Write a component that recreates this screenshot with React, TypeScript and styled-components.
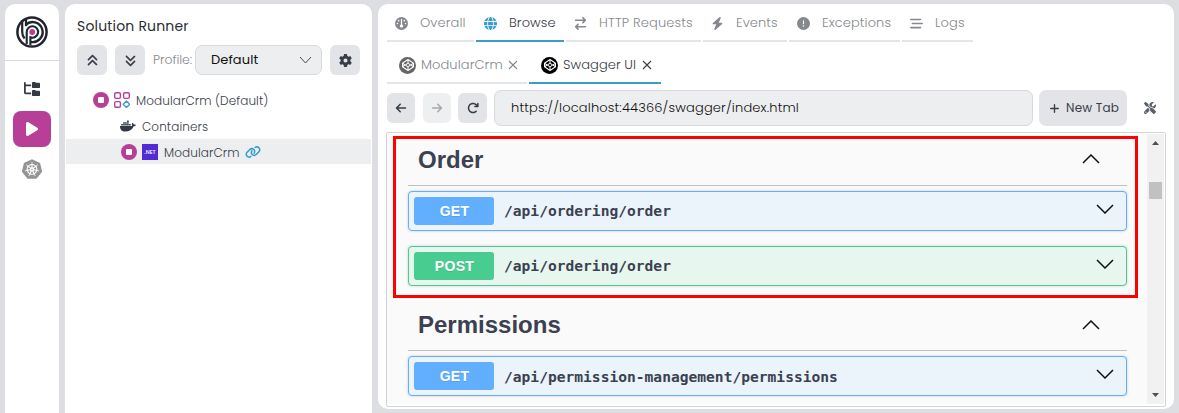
import React from "react";
import styled, { createGlobalStyle } from "styled-components";
import {
  FaFolderTree, FaPlay, FaDocker, FaLink, FaGear, FaAnglesUp, FaAnglesDown, FaGauge, FaGlobe,
  FaArrowRightArrowLeft, FaBolt, FaCircleExclamation, FaBarsStaggered, FaCodepen, FaArrowLeft,
  FaArrowRight, FaArrowRotateRight, FaPlus, FaScrewdriverWrench,
} from "react-icons/fa6";
import { SiKubernetes } from "react-icons/si";

const GlobalStyle = createGlobalStyle`
  *, *::before, *::after { box-sizing: border-box; }
  body { margin: 0; background: #dddee2; font-family: Poppins, Inter, "Liberation Sans", sans-serif; font-size: 13px; overflow: hidden; }
  svg { display: block; flex: none; }
  button { font: inherit; border: 0; padding: 0; }
`;

const Shell = styled.div`
  display: flex;
  gap: 6px;
  height: 413px;
  padding: 4px 5px 0;
`;

const Rail = styled.nav`
  width: 54px;
  background: #fff;
  border-radius: 10px 10px 0 0;
  display: flex;
  flex-direction: column;
  align-items: center;
  color: #343a45;
`;

const LogoBox = styled.div`
  width: 100%;
  height: 57px;
  border-bottom: 1px solid #d9dade;
  display: flex;
  justify-content: center;
  padding-top: 12px;
`;

const RailItem = styled.button<{ $active?: boolean; $color?: string }>`
  width: 38px;
  height: 36px;
  border-radius: 8px;
  display: flex;
  align-items: center;
  justify-content: center;
  margin-bottom: 4px;
  background: ${(p) => (p.$active ? "#b83f98" : "transparent")};
  color: ${(p) => p.$color || "#343a45"};
`;

const RailList = styled.div`
  padding-top: 10px;
`;

const Label = styled.span<{ $w: number; $ls?: number; $color?: string; $size?: number; $weight?: number }>`
  width: ${(p) => p.$w}px;
  flex: none;
  white-space: nowrap;
  letter-spacing: ${(p) => p.$ls || 0}px;
  color: ${(p) => p.$color || "#383d47"};
  font-size: ${(p) => p.$size || 13}px;
  font-weight: ${(p) => p.$weight || 300};
`;

const Runner = styled.section`
  width: 307px;
  background: #fff;
  border-radius: 10px 10px 0 0;
`;

const RunnerTitle = styled.h1`
  margin: 0;
  padding: 12px 0 0 12px;
  height: 41px;
  line-height: 20px;
  display: flex;
`;

const Toolbar = styled.div`
  display: flex;
  align-items: center;
  padding-left: 12px;
  height: 30px;
`;

const IconButton = styled.button<{ $w?: number; $faded?: boolean; $mr?: number }>`
  width: ${(p) => p.$w || 30}px;
  height: 30px;
  margin-right: ${(p) => (p.$mr === undefined ? 8 : p.$mr)}px;
  border-radius: 6px;
  background: ${(p) => (p.$faded ? "#eeeff1" : "#e3e4e8")};
  color: ${(p) => (p.$faded ? "#a4a7ac" : "#383d47")};
  display: flex;
  align-items: center;
  justify-content: center;
  flex: none;
`;

const Select = styled.div`
  width: 127px;
  height: 30px;
  margin: 0 8px 0 3px;
  padding: 0 9px 0 15px;
  border: 1px solid #d8d9de;
  border-radius: 7px;
  background: #edeef0;
  display: flex;
  align-items: center;
  justify-content: space-between;
`;

const Tree = styled.div`
  padding-top: 12px;
`;

const TreeRow = styled.div<{ $indent: number; $selected?: boolean }>`
  height: 26px;
  padding-left: ${(p) => p.$indent}px;
  display: flex;
  align-items: center;
  gap: 6px;
  margin: 0 1px;
  background: ${(p) => (p.$selected ? "linear-gradient(#edeef0, #edeef0) 0 0 / 100% 25px no-repeat" : "transparent")};
  color: #343a45;
  & > ${Label} { padding-top: 1px; }
`;

const StopBadge = styled.span`
  width: 16px;
  height: 16px;
  border-radius: 50%;
  background: #b83f98;
  display: grid;
  place-items: center;
  margin-right: -1px;
  flex: none;
  &::after { content: ""; width: 6px; height: 6px; border-radius: 1px; background: #fff; }
`;

const NetBadge = styled.span`
  width: 16px;
  height: 16px;
  background: #512bd4;
  color: #fff;
  font-size: 5.5px;
  font-weight: 500;
  line-height: 16px;
  text-align: center;
  flex: none;
`;

const Main = styled.main`
  width: 796px;
  height: 405px;
  background: #fff;
  border-radius: 10px;
  padding: 0 8px;
`;

const TabStrip = styled.div<{ $h: number; $drop?: number }>`
  display: flex;
  gap: 2px;
  height: ${(p) => p.$h}px;
  padding-left: 1px;
  & > div { padding-top: ${(p) => p.$drop || 0}px; }
`;

const Tab = styled.div<{ $w: number; $active?: boolean; $pad?: number }>`
  width: ${(p) => p.$w}px;
  height: 100%;
  border-bottom: 2px solid ${(p) => (p.$active ? "#3b9bcd" : "#e4e5e9")};
  display: flex;
  align-items: center;
  padding-left: ${(p) => p.$pad ?? 8}px;
  color: #85888d;
`;

const IconSlot = styled.span<{ $color?: string }>`
  width: 13px;
  margin-right: 12px;
  padding-top: 1px;
  display: flex;
  justify-content: center;
  flex: none;
  color: ${(p) => p.$color || "#85888d"};
`;

const PenCircle = styled.span<{ $bg: string }>`
  width: 17px;
  height: 17px;
  border-radius: 50%;
  background: ${(p) => p.$bg};
  color: #fff;
  display: grid;
  place-items: center;
  margin-right: 5px;
  flex: none;
`;

const AddressRow = styled.div`
  display: flex;
  align-items: center;
  height: 48px;
  padding-left: 1px;
`;

const Address = styled.div`
  width: 539px;
  height: 36px;
  margin-right: 6px;
  padding-left: 16px;
  border: 1px solid #d8d9de;
  border-radius: 7px;
  background: #edeef0;
  display: flex;
  align-items: center;
`;

const NewTab = styled.button`
  width: 88px;
  height: 36px;
  margin-right: 17px;
  border-radius: 7px;
  background: #e3e4e8;
  color: #383d47;
  padding-left: 10px;
  display: flex;
  align-items: center;
  gap: 6px;
  text-align: left;
`;

const Frame = styled.div`
  width: 780px;
  height: 275px;
  border: 1px solid #d3d4da;
  border-radius: 2px;
  padding: 1px 1px 2px 0;
  display: flex;
  position: relative;
`;

const Swagger = styled.div`
  flex: 1;
  background: #fafafa;
  padding: 0 20px 0 21px;
  overflow: hidden;
  font-family: "Liberation Sans", Arial, sans-serif;
`;

const TagHeader = styled.h3<{ $h: number; $lift: number }>`
  margin: 0 0 5px;
  height: ${(p) => p.$h}px;
  padding: 0 27px 11px 10px;
  border-bottom: 1px solid #bfc0c4;
  display: flex;
  align-items: flex-end;
  justify-content: space-between;
  font-size: 24px;
  line-height: 28px;
  color: #3b4151;
  & > svg { margin-bottom: ${(p) => p.$lift}px; }
`;

const Operation = styled.div<{ $color: string; $bg: string }>`
  height: 40px;
  margin-bottom: 15px;
  border: 1px solid ${(p) => p.$color};
  border-radius: 4px;
  background: ${(p) => p.$bg};
  box-shadow: 0 0 3px rgba(0, 0, 0, 0.19);
  display: flex;
  align-items: center;
  padding: 0 12px 0 5px;
  & > svg { margin: 0 0 4px auto; }
`;

const Method = styled.span<{ $color: string }>`
  width: 80px;
  height: 28px;
  border-radius: 3px;
  background: ${(p) => p.$color};
  color: #fff;
  font-size: 14px;
  font-weight: 700;
  letter-spacing: 0.3px;
  text-indent: 1px;
  line-height: 28px;
  text-align: center;
  text-shadow: 0 1px 0 rgba(0, 0, 0, 0.1);
`;

const Path = styled.span<{ $drop?: number }>`
  margin-left: 10px;
  padding-top: ${(p) => p.$drop || 0}px;
  padding-bottom: 1px;
  font-family: Consolas, "DejaVu Sans Mono", monospace;
  font-size: 14.6px;
  line-height: 17px;
  font-weight: 700;
  color: #3b4151;
`;

const Scrollbar = styled.div`
  width: 17px;
  background: #f1f1f1;
  display: flex;
  flex-direction: column;
  align-items: center;
  padding: 7px 0 7px;
`;

const Thumb = styled.div`
  width: 13px;
  height: 17px;
  background: #c1c1c1;
  margin: 37px 0 auto;
`;

const Highlight = styled.div`
  position: absolute;
  left: 6px;
  top: 3px;
  width: 745px;
  height: 162px;
  border: 3px solid #fe0000;
`;

const Logo = () => (
  <svg width="32" height="32" viewBox="0 0 32 32" fill="none" stroke="#20242d" strokeWidth="2.5">
    <circle cx="16" cy="16" r="14.6" />
    <path d="M6.2 4.5V16A10 10 0 0 0 8.6 22.5" strokeWidth="2.2" />
    <path d="M10 3V10.2" strokeWidth="2.2" />
    <path d="M9.6 9A10 10 0 1 1 14.6 25.9" strokeWidth="2.4" />
    <path d="M10.7 28V16A5.7 5.7 0 1 1 14.4 21.3V29" strokeWidth="2.1" />
    <circle cx="16.2" cy="16" r="2.9" fill="#b83f98" stroke="none" />
  </svg>
);

const Modules = () => (
  <svg width="16" height="16" viewBox="0 0 16 16" fill="none" stroke="#b83f98" strokeWidth="1.4">
    <rect x="0.7" y="0.7" width="5.7" height="5.7" rx="1.3" />
    <rect x="9.6" y="0.7" width="5.7" height="5.7" rx="1.3" />
    <rect x="0.7" y="9.6" width="5.7" height="5.7" rx="1.3" />
    <path d="M12.4 9.1L15.6 12.3L12.4 15.5L9.2 12.3Z" stroke="#3b9bcd" strokeLinejoin="round" />
  </svg>
);

const Chevron = ({ up, w = 18, h = 10, color = "#111", sw = 1.5 }: { up?: boolean; w?: number; h?: number; color?: string; sw?: number }) => (
  <svg width={w} height={h} viewBox={`0 0 ${w} ${h}`} fill="none" stroke={color} strokeWidth={sw}>
    <path d={up ? `M1 ${h - 1}L${w / 2} 1L${w - 1} ${h - 1}` : `M1 1L${w / 2} ${h - 1}L${w - 1} 1`} />
  </svg>
);

const Close = ({ color }: { color: string }) => (
  <svg width="10" height="10" viewBox="0 0 10 10" stroke={color} strokeWidth="1.1">
    <path d="M1 1L9 9M9 1L1 9" />
  </svg>
);

const Triangle = ({ down }: { down?: boolean }) => (
  <svg width="7" height="4" viewBox="0 0 7 4" fill="#505050">
    <path d={down ? "M0 0H7L3.5 4Z" : "M0 4H7L3.5 0Z"} />
  </svg>
);

const tabs = [
  { name: "Overall", w: 87, tw: 46, ls: 0.1, icon: <FaGauge size={13} /> },
  { name: "Browse", w: 88, tw: 46, ls: 0.1, icon: <FaGlobe size={13} />, active: true },
  { name: "HTTP Requests", w: 135, tw: 93, ls: 0.15, icon: <FaArrowRightArrowLeft size={13} /> },
  { name: "Events", w: 84, tw: 42, ls: 0.1, icon: <FaBolt size={13} /> },
  { name: "Exceptions", w: 111, tw: 69, ls: 0.1, icon: <FaCircleExclamation size={13} /> },
  { name: "Logs", w: 71, tw: 30, ls: 0.1, icon: <FaBarsStaggered size={13} /> },
];

const blue = { $color: "#61affe", $bg: "#ebf3fb" };
const green = { $color: "#49cc90", $bg: "#e8f6f0" };

const OperationRow = ({ method, path, drop }: { method: "GET" | "POST"; path: string; drop?: number }) => {
  const tone = method === "GET" ? blue : green;
  return (
    <Operation {...tone}>
      <Method $color={tone.$color}>{method}</Method>
      <Path $drop={drop}>{path}</Path>
      <Chevron />
    </Operation>
  );
};

export default function App() {
  return (
    <>
      <GlobalStyle />
      <Shell>
        <Rail>
          <LogoBox><Logo /></LogoBox>
          <RailList>
            <RailItem><FaFolderTree size={16} /></RailItem>
            <RailItem $active $color="#fff"><FaPlay size={16} /></RailItem>
            <RailItem $color="#939393"><SiKubernetes size={20} /></RailItem>
          </RailList>
        </Rail>

        <Runner>
          <RunnerTitle><Label $w={112} $ls={0.18} $size={14} $weight={400} $color="#292d33">Solution Runner</Label></RunnerTitle>
          <Toolbar>
            <IconButton><FaAnglesUp size={13} /></IconButton>
            <IconButton><FaAnglesDown size={13} /></IconButton>
            <Label $w={39} $size={12.5} $ls={-0.05} $color="#85888d">Profile:</Label>
            <Select>
              <Label $w={48} $ls={0.1} $weight={400} $color="#111">Default</Label>
              <Chevron w={13} h={8} color="#444a55" sw={1} />
            </Select>
            <IconButton><FaGear size={13} /></IconButton>
          </Toolbar>
          <Tree>
            <TreeRow $indent={27}>
              <StopBadge />
              <Modules />
              <Label $w={132} $size={12} $ls={0.1}>ModularCrm (Default)</Label>
            </TreeRow>
            <TreeRow $indent={54}>
              <FaDocker size={16} />
              <Label $w={66} $size={12} $ls={0.1}>Containers</Label>
            </TreeRow>
            <TreeRow $indent={55} $selected>
              <StopBadge />
              <NetBadge>.NET</NetBadge>
              <Label $w={75} $size={12} $ls={0.1}>ModularCrm</Label>
              <FaLink size={16} color="#3b9bcd" />
            </TreeRow>
          </Tree>
        </Runner>

        <Main>
          <TabStrip $h={38} $drop={1}>
            {tabs.map((t) => (
              <Tab key={t.name} $w={t.w} $active={t.active}>
                <IconSlot $color={t.active ? "#3b9bcd" : undefined}>{t.icon}</IconSlot>
                <Label $w={t.tw} $ls={t.ls} $color={t.active ? "#383d47" : "#85888d"}>{t.name}</Label>
              </Tab>
            ))}
          </TabStrip>
          <TabStrip $h={42} $drop={6}>
            <Tab $w={140} $pad={12}>
              <PenCircle $bg="#666"><FaCodepen size={12} /></PenCircle>
              <Label $w={87} $color="#85888d" $ls={0.1}>ModularCrm</Label>
              <Close color="#85888d" />
            </Tab>
            <Tab $w={132} $pad={12} $active>
              <PenCircle $bg="#000"><FaCodepen size={12} /></PenCircle>
              <Label $w={79} $ls={0.08}>Swagger UI</Label>
              <Close color="#383d47" />
            </Tab>
          </TabStrip>
          <AddressRow>
            <IconButton $w={28}><FaArrowLeft size={12} /></IconButton>
            <IconButton $w={28} $faded $mr={7}><FaArrowRight size={12} /></IconButton>
            <IconButton $w={29} $mr={7}><FaArrowRotateRight size={12} /></IconButton>
            <Address><Label $w={290} $ls={0.16} $color="#111">https://localhost:44366/swagger/index.html</Label></Address>
            <NewTab>
              <FaPlus size={11} />
              <Label $w={53} $size={12} $ls={0.2} $weight={400}>New Tab</Label>
            </NewTab>
            <FaScrewdriverWrench size={12} color="#5b5f67" />
          </AddressRow>
          <Frame>
            <Swagger>
              <TagHeader $h={52} $lift={10.5}><span>Order</span><Chevron up /></TagHeader>
              <OperationRow method="GET" path="/api/ordering/order" />
              <OperationRow method="POST" path="/api/ordering/order" />
              <TagHeader $h={50} $lift={9.5}><span>Permissions</span><Chevron up /></TagHeader>
              <OperationRow method="GET" path="/api/permission-management/permissions" drop={2} />
            </Swagger>
            <Scrollbar>
              <Triangle />
              <Thumb />
              <Triangle down />
            </Scrollbar>
            <Highlight />
          </Frame>
        </Main>
      </Shell>
    </>
  );
}
